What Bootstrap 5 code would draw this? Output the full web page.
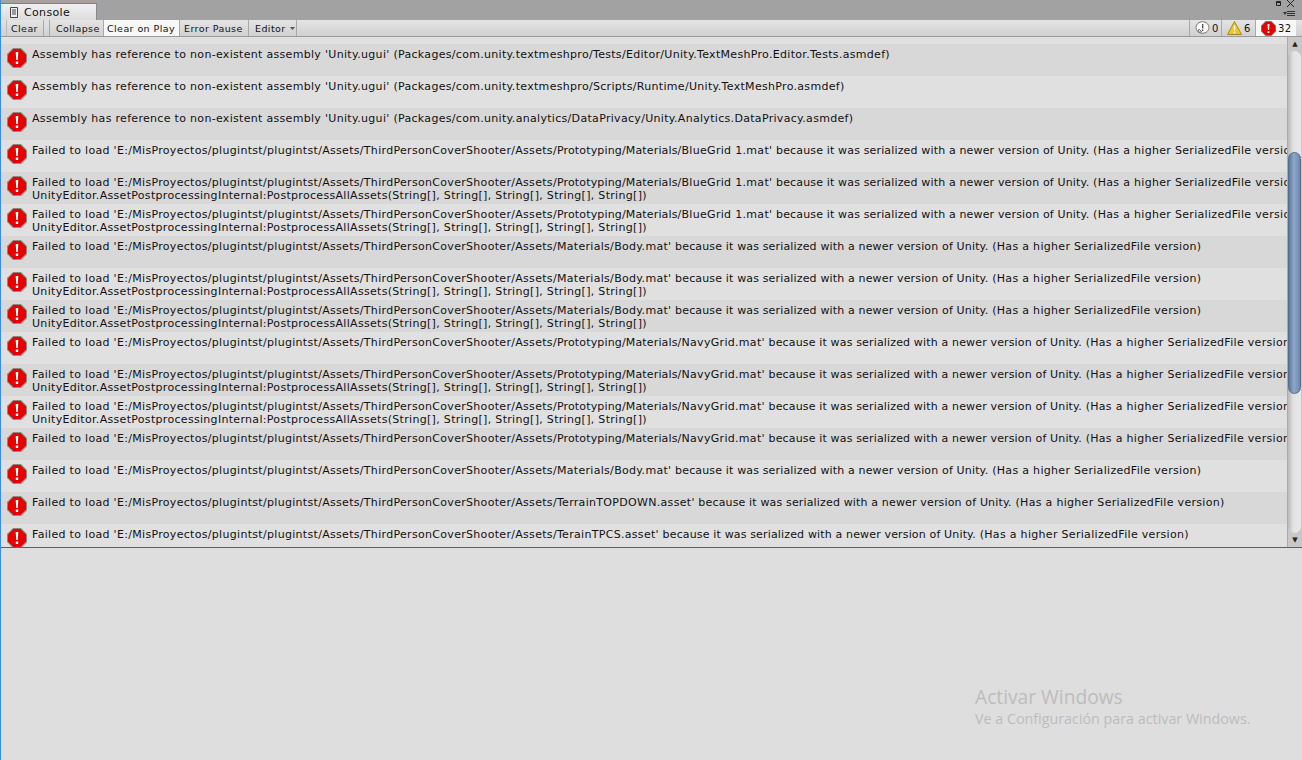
<!DOCTYPE html>
<html lang="en"><head><meta charset="utf-8"><title>Console</title>
<link href="https://cdn.jsdelivr.net/npm/bootstrap@5.3.0/dist/css/bootstrap.min.css" rel="stylesheet">
<style>
html,body{height:100%;margin:0;overflow:hidden}
body{background:#dedede;font-family:"DejaVu Sans",sans-serif;font-size:11px;color:#111;line-height:13px}
.shell{height:760px;border-left:1px solid #3a8ee6;position:relative}
.tabbar{height:20px;background:#a2a2a2;padding-top:3px}
.contab{width:96px;height:17px;background:linear-gradient(#f0f0f0,#dcdcdc);border-top:1px solid #3a8ee6;border-right:1px solid #8a8a8a;font-size:11px;letter-spacing:.35px;padding-left:8px;gap:5px}
.winbtns{margin-top:-3px;padding-right:1px}
.toolstrip{height:17px;background:linear-gradient(#e4e4e4,#d0d0d0);border-bottom:1px solid #9a9a9a;font-size:9.5px;letter-spacing:.42px;padding-left:5px;padding-right:6px}
.tbtn{height:16px;border-right:1px solid #a8a8a8;white-space:nowrap;box-sizing:border-box}
.tbtn.on{background:#f8f8f8}
.b-clear{width:38px;padding-left:4px;margin-right:5px;border-left:1px solid #bbb}
.b-coll{width:55px;padding-left:6px;border-left:1px solid #a8a8a8}
.b-play{width:76px;padding-left:3px}
.b-err{width:69px;padding-left:4px}
.b-edit{width:48px;padding-left:6px;gap:4px}
.tcount{gap:2px;padding-left:5px;font-size:10px;letter-spacing:.5px}
.c-msg{width:33px;border-left:1px solid #a8a8a8}
.c-warn{width:34px}
.c-err{width:40px;border-right:0}
.logarea{height:511px;border-bottom:1px solid #5f5f5f;overflow:hidden}
.rows{flex:1;min-width:0;overflow:hidden}
.logrow{height:32px;padding:4px 0 0 6px;gap:5px;white-space:nowrap;letter-spacing:.31px;background:#e0e0e0}
.logrow.alt{background:#d8d8d8}
.logrow.clip{height:7px;padding:0}
.logrow svg{flex:none}
.logtxt{overflow:hidden}
.tighter{letter-spacing:.155px}
.sbar{width:15px;background:#c8c8c8;border-left:1px solid #aaa}
.strack{flex:1;border-radius:7px;background:linear-gradient(90deg,#b8b8b8,#e2e2e2 40%,#e8e8e8);margin-right:1px}
.sthumb{margin-top:101px;height:242px;border-radius:7px;background:linear-gradient(90deg,#5a789f,#8fa8c9 45%,#6988af);border:1px solid #566c8c}
.sarrow{font-size:7px;line-height:14px;height:14px;text-align:center;color:#222}
.mark-win{position:absolute;left:974px;top:685px;color:#bcbcbc;font-family:"Open Sans",sans-serif}
.mark-a{font-size:19.200px;line-height:23px}
.mark-b{font-size:14.300px;line-height:22px}
</style></head>
<body>
<svg width="0" height="0" class="d-block"><defs>
<symbol id="err" viewBox="0 0 20 20"><path d="M6 0h8l6 6v8l-6 6H6l-6-6V6z" fill="#8a8a8a"/><path d="M6.500 1h7L19 6.500v7L13.500 19h-7L1 13.500v-7z" fill="#e80000"/><path d="M8.700 4h2.600l-.5 8H9.200zM8.800 13.500h2.400V16H8.800z" fill="#fff"/></symbol>
</defs></svg>
<div class="shell d-flex flex-column">
  <div class="tabbar d-flex justify-content-between">
    <div class="contab d-flex align-items-center"><svg width="10" height="11" viewBox="0 0 10 11"><path d="M1.500.5h7v10h-7zM3 3h4M3 5h4M3 7h4" fill="#eee" stroke="#444"/></svg><span>Console</span></div>
    <div class="winbtns">
      <svg class="d-block" width="30" height="20" viewBox="0 0 30 20"><path d="M5.500 1.500h4v4h-4z" fill="none" stroke="#222"/><path d="M5.500 2.500h4" stroke="#222"/><path d="M16 0l7 7M23 0l-7 7" stroke="#222" fill="none"/><path d="M12 12h4l-2 3z" fill="#333"/><path d="M16 11.500h8M16 13.500h8M16 15.500h8" stroke="#333"/></svg>
    </div>
  </div>
  <div class="toolstrip d-flex">
    <div class="tbtn b-clear d-flex align-items-center">Clear</div>
    <div class="tbtn b-coll d-flex align-items-center">Collapse</div>
    <div class="tbtn b-play on d-flex align-items-center">Clear on Play</div>
    <div class="tbtn b-err d-flex align-items-center">Error Pause</div>
    <div class="tbtn b-edit d-flex align-items-center">Editor <svg width="5" height="3" viewBox="0 0 5 3"><path d="M0 0h5L2.500 3z" fill="#555"/></svg></div>
    <div class="flex-grow-1"></div>
    <div class="tbtn tcount c-msg d-flex align-items-center"><svg width="15" height="14" viewBox="0 0 15 14"><ellipse cx="7.500" cy="6.500" rx="6.500" ry="5.800" fill="#fff" stroke="#777"/><path d="M3 11l1-3 3 3z" fill="#fff" stroke="#777"/><path d="M7 3h1.400v4.500H7zM7 8.500h1.400V10H7z" fill="#555"/></svg>0</div>
    <div class="tbtn tcount c-warn d-flex align-items-center"><svg width="15" height="14" viewBox="0 0 15 14"><path d="M7.500 .5L14.500 13.500H.5z" fill="#f5c518" stroke="#a08a30"/><path d="M6.800 4.500h1.400v5H6.800zM6.800 10.500h1.400V12H6.800z" fill="#fff"/></svg>6</div>
    <div class="tbtn tcount c-err on d-flex align-items-center"><svg width="15" height="15"><use href="#err"/></svg>32</div>
  </div>
  <div class="logarea d-flex">
    <div class="rows" id="logs">
      <div class="logrow clip"></div>
    </div>
    <div class="sbar d-flex flex-column">
      <div class="sarrow">&#9650;</div>
      <div class="strack"><div class="sthumb"></div></div>
      <div class="sarrow">&#9660;</div>
    </div>
  </div>
  <div class="mark-win"><div class="mark-a">Activar Windows</div><div class="mark-b">Ve a Configuración para activar Windows.</div></div>
</div>
<script>
var P="Failed to load 'E:/MisProyectos/plugintst/plugintst/Assets/ThirdPersonCoverShooter/Assets/";
var V="'<span class=\"tighter\"> because it was serialized with a newer version of Unity.</span> (Has a higher SerializedFile version)";
var U="UnityEditor.AssetPostprocessingInternal:PostprocessAllAssets(String[], String[], String[], String[], String[])";
var A="Assembly has reference to non-existent assembly 'Unity.ugui' (Packages/com.unity.";
var T="<span class=\"tighter\">Prototyping/Materials/</span>";
var B=P+T+"BlueGrid 1.mat"+V, M=P+"Materials/Body.mat"+V, N=P+T+"NavyGrid.mat"+V;
var rows=[[A+"textmeshpro/Tests/Editor/Unity.TextMeshPro.Editor.Tests.asmdef)"],[A+"textmeshpro/Scripts/Runtime/Unity.TextMeshPro.asmdef)"],[A+"analytics/DataPrivacy/Unity.Analytics.DataPrivacy.asmdef)"],[B],[B,U],[B,U],[M],[M,U],[M,U],[N],[N,U],[N,U],[N],[M],[P+"TerrainTOPDOWN.asset"+V],[P+"TerainTPCS.asset"+V]];
var h="";
rows.forEach(function(r,i){h+='<div class="logrow d-flex'+(i%2?'':' alt')+'"><svg width="20" height="20"><use href="#err"/></svg><div class="logtxt">'+r.join('<br>')+'</div></div>';});
document.getElementById('logs').insertAdjacentHTML('beforeend',h);
</script>
<script src="https://cdn.jsdelivr.net/npm/bootstrap@5.3.0/dist/js/bootstrap.bundle.min.js"></script>
</body></html>
